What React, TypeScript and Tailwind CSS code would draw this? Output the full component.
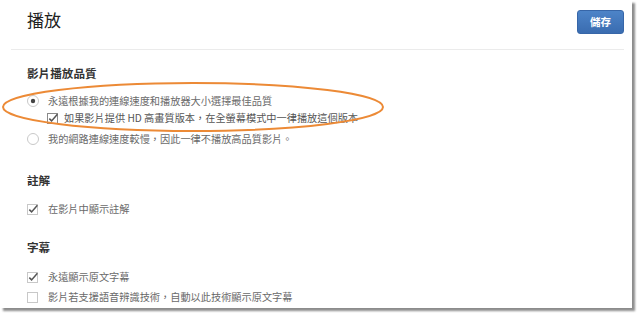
import React from "react";

const font = { fontFamily: '"Noto Sans CJK TC", "Noto Sans", sans-serif' };

function Radio({ checked }: { checked?: boolean }) {
  return (
    <svg width="12" height="12" viewBox="0 0 12 12" className="shrink-0">
      <circle cx="6" cy="6" r="5.5" fill="#fff" stroke="#c8c8c8" strokeWidth="1" />
      {checked && <circle cx="6" cy="6" r="2.2" fill="#444" />}
    </svg>
  );
}

function Check({ checked, dark }: { checked?: boolean; dark?: boolean }) {
  return (
    <svg width="12" height="12" viewBox="0 0 12 12" className="shrink-0">
      <rect x="0.5" y="1.5" width="10" height="10" fill="#fff" stroke={dark ? "#8a8a8a" : "#c8c8c8"} strokeWidth="1" />
      {checked && (
        <path d="M2.3 6.6 L4.6 8.9 L10.4 2.2" fill="none" stroke="#555" strokeWidth="1.5" />
      )}
    </svg>
  );
}

export default function App() {
  return (
    <div className="w-[640px] h-[316px] bg-white overflow-hidden" style={font}>
      <div className="relative w-[632px] h-[308px] bg-white shadow-[3px_3px_2px_rgba(0,0,0,0.45)]">
        {/* Header */}
        <div className="ml-[11px] w-[613px] h-[50px] border-b border-[#ebebeb] flex items-start justify-between pt-[10px]">
          <h1 className="pl-4 -mt-[3px] text-[17px] text-[#222] font-normal">播放</h1>
          <button className="w-[47px] h-[24px] rounded-[3px] border border-[#3766a8] bg-gradient-to-b from-[#4d84c8] to-[#3a6cb0] text-white text-[10.5px] font-bold flex items-center justify-center">
            儲存
          </button>
        </div>

        <div className="pl-[27px] text-[10.2px] text-[#6a6a6a]">
          {/* 影片播放品質 */}
          <div className="pt-[14px]">
            <div className="h-[20px] flex items-center text-[11.6px] font-bold text-[#333]">影片播放品質</div>
            <div className="mt-[8px] h-[18px] flex items-center gap-[9px]">
              <Radio checked />
              <span>永遠根據我的連線速度和播放器大小選擇最佳品質</span>
            </div>
            <div className="h-[16px] pl-[20px] flex items-center gap-[5px] text-[#555]">
              <Check checked dark />
              <span>如果影片提供 HD 高畫質版本，在全螢幕模式中一律播放這個版本</span>
            </div>
            <div className="mt-[4px] h-[18px] flex items-center gap-[9px]">
              <Radio />
              <span>我的網路連線速度較慢，因此一律不播放高品質影片。</span>
            </div>
          </div>

          {/* 註解 */}
          <div className="mt-[23px] h-[20px] flex items-center text-[11.6px] font-bold text-[#333]">註解</div>
          <div className="mt-[9px] h-[18px] flex items-center gap-[9px]">
            <Check checked />
            <span>在影片中顯示註解</span>
          </div>

          {/* 字幕 */}
          <div className="mt-[20px] h-[20px] flex items-center text-[11.6px] font-bold text-[#333]">字幕</div>
          <div className="mt-[10px] h-[18px] flex items-center gap-[9px]">
            <Check checked />
            <span>永遠顯示原文字幕</span>
          </div>
          <div className="mt-[2px] h-[18px] flex items-center gap-[9px]">
            <Check />
            <span>影片若支援語音辨識技術，自動以此技術顯示原文字幕</span>
          </div>
        </div>

        {/* highlight ellipse */}
        <svg className="absolute left-0 top-[80px] pointer-events-none" width="390" height="56" viewBox="0 0 390 56">
          <ellipse cx="193" cy="27" rx="190" ry="24" fill="none" stroke="#ec8a36" strokeWidth="2" />
        </svg>
      </div>
    </div>
  );
}
